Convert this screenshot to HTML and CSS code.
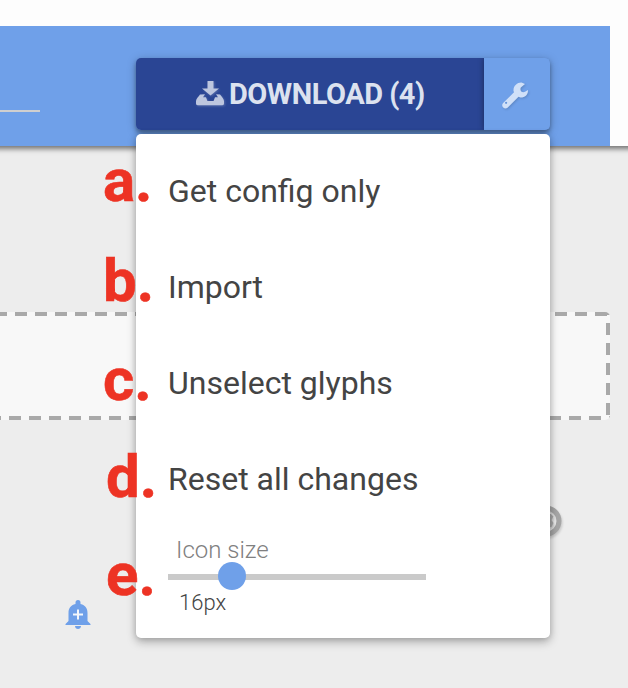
FILE: index.html
```html
<!DOCTYPE html>
<html lang="en">
<head>
<meta charset="utf-8">
<title>Download options</title>
<link rel="stylesheet" href="styles.css">
</head>
<body>
<div class="page">
  <header class="topbar">
    <div class="toolbar">
      <div class="search-line"></div>
      <div class="actions">
        <div class="button-group">
          <div class="download">
            <svg class="download-icon" viewBox="0 0 30 26"><path d="M11.500 0h6v7.500h5.500L14.500 14.500 6 7.500h5.500zM5 13.500l4-.3-2 3h3l1.400 3.800h6.200l1.400-3.800h3l-2-3 4 .3c1.500 2 4 4.500 4 6.600v2.500c0 1-.7 1.700-1.700 1.700h-24.600c-1 0-1.700-.7-1.700-1.700v-2.500c0-2.500 3-4.600 4-6.600z"/></svg>
            <span class="download-label">DOWNLOAD (4)</span>
          </div>
          <div class="settings">
            <svg class="wrench-icon" viewBox="0 0 28 28"><path fill-rule="evenodd" d="M12.500 9C12 4 16.500.3 20.500.6l3.500 1.300-4.200 3.600c-1.300 3 1.200 5.800 4.200 4.300L26.900 8c.6 4-3 7.800-7.500 7.500L17.500 14.800 6.500 25.800c-2.800 2.400-7-1.700-4.600-4.500L13 10.300zM6.200 20.800a1.100 1.100 0 1 0-2.200 0 1.100 1.100 0 0 0 2.200 0z"/></svg>
          </div>
        </div>
        <div class="menu">
          <div class="item">Get config only</div>
          <div class="item">Import</div>
          <div class="item">Unselect glyphs</div>
          <div class="item">Reset all changes</div>
          <div class="size">
            <div class="size-label">Icon size</div>
            <div class="track"><div class="thumb"></div></div>
            <div class="size-value">16px</div>
          </div>
        </div>
      </div>
    </div>
  </header>
  <main class="content">
    <div class="dropzone"></div>
    <div class="glyph-row">
      <svg class="coin" viewBox="0 0 34 36"><circle cx="16" cy="16" r="13" fill="none" stroke="#a6a6a6" stroke-width="5"/><path d="M13 9h8l2.500 2.500-2 3.500 2 3-2 4H13z" fill="#a6a6a6"/></svg>
    </div>
    <svg class="bell" viewBox="0 0 28 30"><path fill="#6fa0e9" d="M11.500 4V2.500a2.500 2.500 0 0 1 5 0V4c5 1.200 7 4.500 7 9v8l3 3v1h-25v-1l3-3v-8c0-4.500 2-7.800 7-9zM11 26h6c0 4-6 4-6 0z"/><path d="M14 9.500v10M9 14.500h10" stroke="#f4f7fc" stroke-width="2"/></svg>
  </main>
  <div class="mark mark-a">a.</div>
  <div class="mark mark-b">b.</div>
  <div class="mark mark-c">c.</div>
  <div class="mark mark-d">d.</div>
  <div class="mark mark-e">e.</div>
</div>
</body>
</html>
```
FILE: styles.css
```css
* { box-sizing: border-box; }
body { margin: 0; font-family: Roboto, "Liberation Sans", sans-serif; }
svg { display: block; }
.page { position: relative; width: 628px; height: 688px; overflow: hidden; background: #ededed; }

.topbar { position: relative; z-index: 1; width: 648px; height: 146px; margin-left: -10px; padding: 26px 0 0 10px; background: #fdfdfd; box-shadow: 0 3px 5px rgba(0,0,0,.5); }
.toolbar { display: flex; justify-content: space-between; width: 610px; height: 120px; padding: 32px 60px 0 0; background: #6fa0e9; }
.search-line { width: 40px; height: 54px; border-bottom: 2px solid #cfcfcf; }
.actions { position: relative; width: 414px; }
.button-group { display: flex; height: 72px; border-radius: 5px; box-shadow: 0 2px 10px rgba(0,0,0,.25), 0 3px 4px rgba(0,0,0,.3); overflow: hidden; }
.download { display: flex; align-items: center; width: 348px; padding-left: 60px; background: #2a4594; color: #dce2ef; }
.download-icon { width: 30px; height: 26px; fill: #bdc6df; filter: drop-shadow(1px 1px 1px rgba(255,255,255,.2)); }
.download-label { margin-left: 3px; font-size: 29px; font-weight: 700; letter-spacing: -.5px; line-height: 73px; white-space: nowrap; }
.settings { display: flex; align-items: center; padding: 3px 0 0 17px; width: 66px; background: #6fa0e9; box-shadow: 0 0 6px rgba(0,0,0,.4); }
.wrench-icon { width: 28px; height: 28px; fill: #d0e0f8; filter: drop-shadow(1px 1px 1px rgba(0,0,0,.15)); }

.menu { position: absolute; top: 76px; left: 0; width: 414px; height: 504px; padding: 8px 32px; border-radius: 5px; background: #fff; box-shadow: 0 4px 10px rgba(0,0,0,.28), 0 0 6px rgba(0,0,0,.14); }
.item { height: 96px; font-size: 32px; line-height: 98px; color: #444; white-space: nowrap; }
.size-label { height: 48px; padding-left: 8px; font-size: 24px; font-weight: 300; line-height: 49px; color: #808080; }
.track { width: 258px; height: 6px; background: #cacaca; }
.thumb { width: 28px; height: 28px; margin-left: 50px; border-radius: 50%; background: #6fa0e9; transform: translateY(-12px); }
.size-value { padding-left: 11px; font-size: 22px; font-weight: 300; line-height: 46px; color: #444; }

.content { padding-top: 166px; }
.dropzone {
  width: 610px; height: 108px; border-radius: 0 5px 5px 0;
  background:
    linear-gradient(90deg, #a9a9a9 12px, transparent 12px) 15px 0 / 20px 4px repeat-x,
    linear-gradient(90deg, #a9a9a9 12px, transparent 12px) 9px 104px / 20px 4px repeat-x,
    linear-gradient(180deg, #a9a9a9 12px, transparent 12px) 606px 11px / 4px 20px repeat-y,
    #f8f8f8;
}
.glyph-row { padding: 85px 0 0 530px; }
.coin { width: 34px; height: 36px; filter: drop-shadow(1px 2px 1px rgba(0,0,0,.15)); }
.bell { width: 28px; height: 30px; margin: 59px 0 0 64px; }

.mark { position: absolute; z-index: 2; font-size: 60px; font-weight: 700; line-height: 60px; color: #ed3324; -webkit-text-stroke: .6px #ed3324; }
.mark-a { left: 103px; top: 151px; }
.mark-b { left: 103px; top: 251px; }
.mark-c { left: 103px; top: 350px; }
.mark-d { left: 106px; top: 447px; }
.mark-e { left: 106px; top: 545px; }
```
